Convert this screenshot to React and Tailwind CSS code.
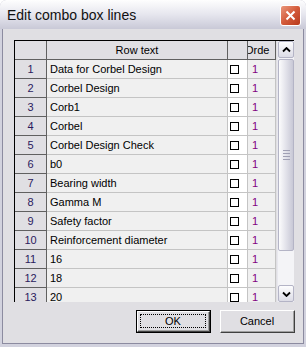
import React from "react";

const rows = [
  "Data for Corbel Design",
  "Corbel Design",
  "Corb1",
  "Corbel",
  "Corbel Design Check",
  "b0",
  "Bearing width",
  "Gamma M",
  "Safety factor",
  "Reinforcement diameter",
  "16",
  "18",
  "20",
];

const Chevron = ({ down }) => (
  <svg width="9" height="6" viewBox="0 0 9 6">
    <path
      d={down ? "M1 1.5 L4.5 5 L8 1.5" : "M1 4.5 L4.5 1 L8 4.5"}
      fill="none"
      stroke="#000"
      strokeWidth="1.8"
    />
  </svg>
);

const ScrollButton = ({ down }) => (
  <div className="h-[17px] flex items-center justify-center rounded-[2px] border border-[#b4b4c6] bg-linear-to-b from-[#fdfdfe] to-[#dcdce6]">
    <Chevron down={down} />
  </div>
);

const App = () => {
  return (
    <div className="w-[306px] h-[347px] flex flex-col bg-[#d2d2de] rounded-t-[6px] font-['Liberation_Sans',Arial,sans-serif] text-black overflow-hidden">
      {/* caption */}
      <div className="h-[29px] shrink-0 flex items-center justify-between pl-[7px] pr-[5px] rounded-t-[6px] bg-linear-to-b from-[#fefefe] via-[#e6e6ee] to-[#c9c9d7]">
        <span className="text-[14px] leading-none text-[#101010]">Edit combo box lines</span>
        <div className="w-[21px] h-[21px] mt-[2px] rounded-[3px] border border-white bg-linear-to-br from-[#e9977c] via-[#d35a3a] to-[#b8391c] flex items-center justify-center">
          <svg width="11" height="11" viewBox="0 0 11 11">
            <path d="M1.5 1.5 L9.5 9.5 M9.5 1.5 L1.5 9.5" stroke="#fff" strokeWidth="2" />
          </svg>
        </div>
      </div>

      {/* client area */}
      <div className="flex-1 mx-[2px] mb-[3px] border-x border-b border-[#8c8ba0] bg-[#e0dfe3] flex flex-col pl-[11px] pt-[11px] pr-[8px]">
        <div className="w-[280px] h-[262px] shrink-0 flex border-l border-t border-black overflow-hidden text-[11px] leading-none">
          <div className="w-[262px] flex flex-col">
            {/* header */}
            <div className="h-[19px] shrink-0 flex bg-[#e0dfe3]">
              <div className="w-[32px] border-r border-b border-[#606060]" />
              <div className="w-[181px] flex items-center justify-center border-r border-b border-[#606060]">Row text</div>
              <div className="w-[20px] border-r border-b border-[#606060]" />
              <div className="w-[28px] flex items-center overflow-hidden border-r border-b border-[#606060]">
                <span className="ml-[-3px] whitespace-nowrap">Orde</span>
              </div>
            </div>
            {rows.map((r, i) => (
              <div key={i} className="h-[19px] shrink-0 flex">
                <div className="w-[32px] flex items-center justify-center bg-[#e0dfe3] border-r border-b border-[#606060] text-[#2a1a5e]">
                  {i + 1}
                </div>
                <div className="w-[181px] flex items-center pl-[3px] bg-[#f0f0f0] border-r border-b border-[#c4c4c4] whitespace-nowrap overflow-hidden">
                  {r}
                </div>
                <div className="w-[20px] flex items-center pl-[2px] bg-white border-r border-b border-[#c4c4c4]">
                  <div className="w-[9px] h-[9px] border border-black" />
                </div>
                <div className="w-[28px] flex items-center pl-[4px] bg-[#f0f0f0] border-r border-b border-[#c4c4c4] text-[#800080]">
                  1
                </div>
              </div>
            ))}
          </div>

          {/* scrollbar */}
          <div className="w-[17px] h-[261px] flex flex-col bg-[#f4f4f7] border-l border-[#e8e8ee] px-[0px]">
            <ScrollButton />
            <div className="h-[192px] mt-[1px] rounded-[2px] border border-[#b4b4c6] bg-linear-to-r from-[#fcfcfd] via-[#e2e2ea] to-[#c8c8d6] flex flex-col items-center justify-center gap-[2px]">
              <div className="w-[7px] h-px bg-[#a0a0b4]" />
              <div className="w-[7px] h-px bg-[#a0a0b4]" />
              <div className="w-[7px] h-px bg-[#a0a0b4]" />
              <div className="w-[7px] h-px bg-[#a0a0b4]" />
            </div>
            <div className="flex-1" />
            <ScrollButton down />
          </div>
        </div>

        {/* buttons */}
        <div className="flex justify-end gap-[9px] mt-[8px]">
          <div className="w-[75px] h-[23px] border border-black">
            <div className="w-full h-full border-l border-t border-white border-r border-b border-r-[#404040] border-b-[#404040] bg-[#e0dfe3]">
              <div className="w-full h-full border-r border-b border-[#a0a0a0] p-[2px]">
                <div className="w-full h-full border border-dotted border-black flex items-center justify-center text-[11px] leading-none">
                  OK
                </div>
              </div>
            </div>
          </div>
          <div className="w-[75px] h-[23px] border-l border-t border-white border-r border-b border-r-[#404040] border-b-[#404040] bg-[#e0dfe3]">
            <div className="w-full h-full border-r border-b border-[#a0a0a0] flex items-center justify-center text-[11px] leading-none">
              Cancel
            </div>
          </div>
        </div>
      </div>
    </div>
  );
};

export default App;
